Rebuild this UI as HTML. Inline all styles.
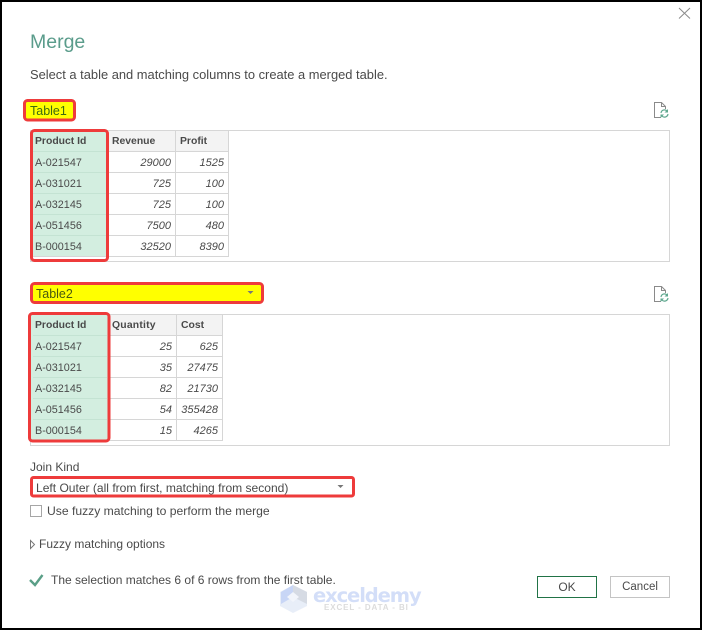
<!DOCTYPE html>
<html><head><meta charset="utf-8"><style>
html,body{margin:0;padding:0;background:#000}
#p{position:relative;width:702px;height:630px;overflow:hidden;background:#000;font-family:"Liberation Sans",sans-serif;color:#444}
#d{position:absolute;left:2px;top:2px;width:698px;height:626px;background:#fff}
.a{position:absolute}
.t{position:absolute;white-space:nowrap;font-size:12px;line-height:16px;color:#4a4a4a}
.n{font-style:italic;text-align:right;font-size:11px}
.c{font-size:10.800px}
.b{font-weight:bold;font-size:10.400px}
</style></head><body><div id="p"><div id="d"></div>

<svg class="a" style="left:0;top:0" width="702" height="630">
<!-- table 1 -->
<rect x="30.500" y="130.500" width="639" height="131" fill="#fff" stroke="#d6d6d6"/>
<rect x="31" y="131" width="77" height="126" fill="#d3eee0"/>
<rect x="108" y="131" width="120" height="20" fill="#f3f3f3"/>
<g stroke="#d6d6d6" fill="none">
<path d="M108 151.500H228.500M108 172.500H228.500M108 193.500H228.500M108 214.500H228.500M108 235.500H228.500M31 256.500H228.500M175.500 131V257M228.500 131V257"/>
</g>
<g stroke="#c4e3d3"><path d="M33 151.500H107M33 172.500H107M33 193.500H107M33 214.500H107M33 235.500H107"/></g>
<!-- table 2 -->
<rect x="30.500" y="314.500" width="639" height="131" fill="#fff" stroke="#d6d6d6"/>
<rect x="31" y="315" width="77" height="126" fill="#d3eee0"/>
<rect x="108" y="315" width="114" height="20" fill="#f3f3f3"/>
<g stroke="#d6d6d6" fill="none">
<path d="M108 335.500H222.500M108 356.500H222.500M108 377.500H222.500M108 398.500H222.500M108 419.500H222.500M31 440.500H222.500M176.500 315V441M222.500 315V441"/>
</g>
<g stroke="#c4e3d3"><path d="M33 335.500H107M33 356.500H107M33 377.500H107M33 398.500H107M33 419.500H107"/></g>
<!-- highlighted -->
<rect x="24.500" y="100.500" width="50" height="19.500" rx="3" fill="#ffff00" stroke="#ee3b3b" stroke-width="3"/>
<rect x="31.500" y="130.500" width="76" height="130" rx="3" fill="none" stroke="#ee3b3b" stroke-width="3"/>
<rect x="31.500" y="283.500" width="231" height="19" rx="3" fill="#ffff00" stroke="#ee3b3b" stroke-width="3"/>
<rect x="29.500" y="313.500" width="79.500" height="127.500" rx="3" fill="none" stroke="#ee3b3b" stroke-width="3"/>
<rect x="31.500" y="477.500" width="322" height="18.500" rx="2" fill="#fff" stroke="#ee3b3b" stroke-width="3"/>
<path d="M247.500 291h6l-3 3zM337.500 485h6l-3 3z" fill="#777"/>
<!-- close -->
<path d="M679 8L690 18.500M690 8L679 18.500" stroke="#8a8a8a" fill="none"/>
<!-- doc icons -->
<g fill="none">
<path d="M661 117.500H654.500V102.500H661.500L665.500 106.500V109M661.500 102.500V106.500H665.500" stroke="#8a8a8a"/>
<path d="M661 113A3.500 3.500 0 0 1 667 111M668 114A3.500 3.500 0 0 1 662 116" stroke="#5fa88f" stroke-width="1.200"/>
<path d="M668 109V112.500H664.500zM660.500 118V114.500H664z" fill="#5fa88f"/>
</g>
<g fill="none">
<path d="M661 301.500H654.500V286.500H661.500L665.500 290.500V293M661.500 286.500V290.500H665.500" stroke="#8a8a8a"/>
<path d="M661 297A3.500 3.500 0 0 1 667 295M668 298A3.500 3.500 0 0 1 662 300" stroke="#5fa88f" stroke-width="1.200"/>
<path d="M668 293V296.500H664.500zM660.500 302V298.500H664z" fill="#5fa88f"/>
</g>
<!-- checkbox, arrow, check -->
<rect x="30.500" y="505.500" width="11" height="11" fill="#fff" stroke="#a6a6a6"/>
<path d="M30.500 540.500L34.500 544.500L30.500 548.500z" fill="#fff" stroke="#777"/>
<path d="M30 580L35 585L42.500 575" fill="none" stroke="#5a9f87" stroke-width="2.400"/>
<!-- buttons -->
<rect x="537.500" y="576.500" width="59" height="21" fill="#fff" stroke="#217346"/>
<rect x="610.500" y="576.500" width="59" height="21" fill="#fff" stroke="#c4c4c4"/>
<!-- watermark logo -->
<path d="M293 585L307 592V606L293 613L280 606V592z" fill="#e8eef8"/>
<path d="M293 585V597L281 604V592z" fill="#c8d6f6"/>
<path d="M293 585L307 592V604L293 597z" fill="#d6dbe4"/>
<path d="M293 592L299 597L293 602L287 597z" fill="#f2f5fb"/>
</svg>

<div class="t" style="left:30px;top:29px;font-size:19.500px;line-height:26px;color:#5a9c8b">Merge</div>
<div class="t" style="left:30px;top:67px;font-size:12.900px">Select a table and matching columns to create a merged table.</div>
<div class="t" style="left:30px;top:103px;color:#3d6b10;font-size:12.500px">Table1</div>
<div class="t" style="left:36px;top:286px;color:#4a5a10;font-size:12.500px">Table2</div>

<div class="t b" style="left:35px;top:134px">Product Id</div>
<div class="t b" style="left:112px;top:134px">Revenue</div>
<div class="t b" style="left:180px;top:134px">Profit</div>
<div class="t c" style="left:35px;top:155px">A-021547</div>
<div class="t c" style="left:35px;top:176px">A-031021</div>
<div class="t c" style="left:35px;top:197px">A-032145</div>
<div class="t c" style="left:35px;top:218px">A-051456</div>
<div class="t c" style="left:35px;top:239px">B-000154</div>
<div class="t n" style="right:531px;top:155px">29000</div>
<div class="t n" style="right:531px;top:176px">725</div>
<div class="t n" style="right:531px;top:197px">725</div>
<div class="t n" style="right:531px;top:218px">7500</div>
<div class="t n" style="right:531px;top:239px">32520</div>
<div class="t n" style="right:478px;top:155px">1525</div>
<div class="t n" style="right:478px;top:176px">100</div>
<div class="t n" style="right:478px;top:197px">100</div>
<div class="t n" style="right:478px;top:218px">480</div>
<div class="t n" style="right:478px;top:239px">8390</div>

<div class="t b" style="left:35px;top:318px">Product Id</div>
<div class="t b" style="left:112px;top:318px;letter-spacing:.2px">Quantity</div>
<div class="t b" style="left:181px;top:318px">Cost</div>
<div class="t c" style="left:35px;top:339px">A-021547</div>
<div class="t c" style="left:35px;top:360px">A-031021</div>
<div class="t c" style="left:35px;top:381px">A-032145</div>
<div class="t c" style="left:35px;top:402px">A-051456</div>
<div class="t c" style="left:35px;top:423px">B-000154</div>
<div class="t n" style="right:530px;top:339px">25</div>
<div class="t n" style="right:530px;top:360px">35</div>
<div class="t n" style="right:530px;top:381px">82</div>
<div class="t n" style="right:530px;top:402px">54</div>
<div class="t n" style="right:530px;top:423px">15</div>
<div class="t n" style="right:484px;top:339px">625</div>
<div class="t n" style="right:484px;top:360px">27475</div>
<div class="t n" style="right:484px;top:381px">21730</div>
<div class="t n" style="right:484px;top:402px">355428</div>
<div class="t n" style="right:484px;top:423px">4265</div>

<div class="t" style="left:30px;top:459px;font-size:12px">Join Kind</div>
<div class="t" style="left:36px;top:480px;font-size:12.050px">Left Outer (all from first, matching from second)</div>
<div class="t" style="left:47px;top:503px;font-size:12.150px">Use fuzzy matching to perform the merge</div>
<div class="t" style="left:39px;top:536px;font-size:12px">Fuzzy matching options</div>
<div class="t" style="left:51px;top:572px;font-size:12px">The selection matches 6 of 6 rows from the first table.</div>
<div class="t" style="left:537px;top:579px;width:60px;text-align:center;font-size:12px">OK</div>
<div class="t" style="left:610px;top:579px;width:60px;text-align:center;font-size:11.500px">Cancel</div>

<div class="t" style="left:313px;top:584px;font-size:19.500px;line-height:24px;font-weight:bold;color:#d3def8;font-family:'DejaVu Sans',sans-serif;letter-spacing:-1.100px">exceldemy</div>
<div class="t" style="left:324px;top:603px;font-size:8px;line-height:10px;font-weight:bold;color:#dcdcdc;letter-spacing:.9px">EXCEL - DATA - BI</div>
</div></body></html>
